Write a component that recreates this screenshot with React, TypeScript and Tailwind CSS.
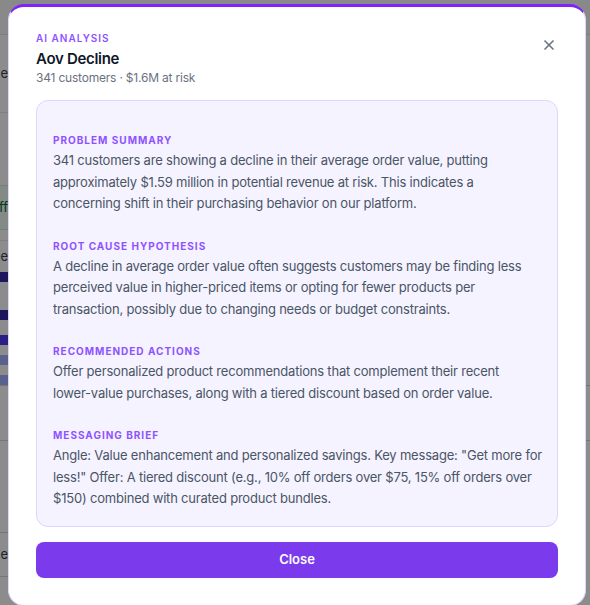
import type { ReactNode } from "react";
import { X } from "lucide-react";

const sections: { title: string; body: ReactNode }[] = [
  {
    title: "Problem Summary",
    body: "341 customers are showing a decline in their average order value, putting approximately $1.59 million in potential revenue at risk. This indicates a concerning shift in their purchasing behavior on our platform.",
  },
  {
    title: "Root Cause Hypothesis",
    body: "A decline in average order value often suggests customers may be finding less perceived value in higher-priced items or opting for fewer products per transaction, possibly due to changing needs or budget constraints.",
  },
  {
    title: "Recommended Actions",
    body: (
      <>
        Offer personalized product recommendations that complement their recent{" "}
        <span className="whitespace-nowrap">lower-value</span> purchases, along with a tiered
        discount based on order value.
      </>
    ),
  },
  {
    title: "Messaging Brief",
    body: "Angle: Value enhancement and personalized savings. Key message: \"Get more for less!\" Offer: A tiered discount (e.g., 10% off orders over $75, 15% off orders over $150) combined with curated product bundles.",
  },
];

function BackgroundPage() {
  // only a sliver of this shows at the left edge, behind the overlay
  return (
    <div className="flex flex-col w-full h-[605px] bg-white text-[13px] text-gray-700">
      <div className="h-[35px] bg-gray-50 border-b border-gray-200" />
      <div className="h-[78px] flex items-center justify-end border-b border-gray-200 w-[8px] overflow-hidden">
        <span className="whitespace-nowrap">e</span>
      </div>
      <div className="h-[72px]" />
      <div className="h-[45px] flex items-center w-[8px] justify-end overflow-hidden bg-green-50 border-y border-green-200 text-green-800">
        <span className="whitespace-nowrap">ff</span>
      </div>
      <div className="h-[10px]" />
      <div className="h-[32px] flex items-center w-[8px] justify-end overflow-hidden border-t border-gray-200">
        <span className="whitespace-nowrap">pe</span>
      </div>
      <div className="h-[10px] bg-indigo-800 w-[8px]" />
      <div className="h-[28px]" />
      <div className="h-[10px] bg-indigo-800 w-[8px]" />
      <div className="h-[15px]" />
      <div className="h-[10px] bg-indigo-600 w-[8px]" />
      <div className="h-[10px]" />
      <div className="h-[10px] bg-indigo-300 w-[8px]" />
      <div className="h-[10px]" />
      <div className="h-[10px] bg-indigo-300 w-[8px]" />
      <div className="h-[55px] border-t border-gray-300" />
      <div className="h-[92px] border-t border-gray-300" />
      <div className="h-[45px] flex items-center w-[8px] justify-end overflow-hidden border-y border-gray-300">
        <span className="whitespace-nowrap">ne</span>
      </div>
    </div>
  );
}

export default function App() {
  return (
    <div
      className="relative w-[590px] h-[605px] overflow-hidden"
      style={{ fontFamily: "Inter, 'Noto Sans', sans-serif" }}
    >
      <BackgroundPage />
      <div className="absolute inset-0 bg-black/45 pt-[4px] pl-[8px]">
        <div className="w-[578px] h-[602px] bg-white rounded-2xl border border-violet-200 border-t-[3px] border-t-violet-600 px-[27px] pt-6 pb-6 flex flex-col">
          <div className="flex items-start justify-between">
            <div>
              <p className="text-[10px] leading-[14px] font-semibold tracking-[0.1em] uppercase text-violet-500">
                AI Analysis
              </p>
              <h2 className="mt-[3px] text-[15px] leading-[22px] font-semibold tracking-[-0.3px] text-gray-900">
                Aov Decline
              </h2>
              <p className="text-[12px] leading-4 tracking-[-0.2px] text-gray-500">
                341 customers · $1.6M at risk
              </p>
            </div>
            <button className="mt-[6px] mr-[1px] text-gray-500">
              <X size={16} strokeWidth={2.5} />
            </button>
          </div>

          <div className="mt-[14px] rounded-xl border border-violet-200 bg-violet-50 pl-4 pr-[14px] pt-8 pb-4 flex flex-col gap-6">
            {sections.map((s) => (
              <div key={s.title}>
                <h3 className="text-[10px] leading-[14px] font-bold tracking-[0.1em] uppercase text-violet-500 mb-[3px]">
                  {s.title}
                </h3>
                <p className="text-[13px] leading-[21.5px] tracking-[-0.2px] text-gray-600">{s.body}</p>
              </div>
            ))}
          </div>

          <button className="mt-[15px] h-9 w-full rounded-lg bg-[#7c3aed] text-white text-[13px] font-semibold">
            Close
          </button>
        </div>
      </div>
    </div>
  );
}
